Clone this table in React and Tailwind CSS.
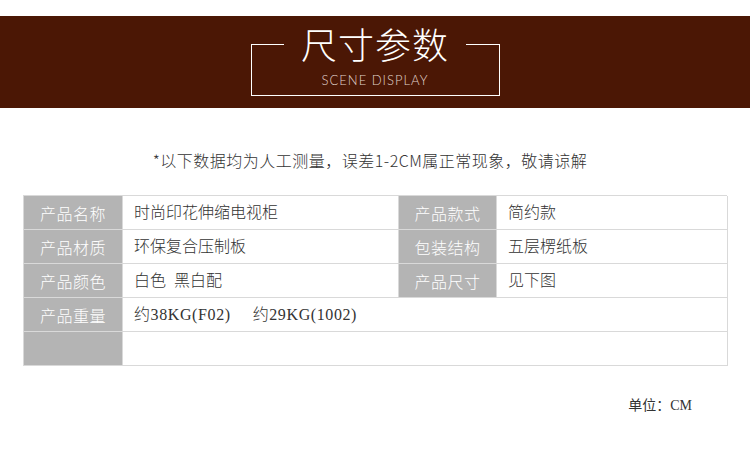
import React from "react";

const cjk = { fontFamily: '"Noto Sans CJK SC", "Noto Sans", sans-serif' };
const serif = { fontFamily: '"Liberation Serif", "Noto Sans CJK SC", serif' };

function Label({ children }) {
  return (
    <div className="h-[34px] bg-[#b4b4b4] border-r border-b border-[#d9d9d9] flex items-center justify-center text-white text-[16px] font-light tracking-[0.5px]" style={cjk}>
      {children}
    </div>
  );
}
function Val({ children, span }) {
  return (
    <div className={`h-[34px] border-r border-b border-[#d9d9d9] flex items-center pl-[11px] text-[#333] text-[16px] font-light ${span ? "col-span-3" : ""}`} style={serif}>
      {children}
    </div>
  );
}

export default function App() {
  return (
    <div className="w-[750px] h-[452px] bg-white overflow-hidden">
      <div className="pt-4">
        <div className="h-[92px] bg-[#4b1705] flex justify-center">
          <div className="relative mt-[28px] w-[249px] h-[52px] border border-white flex justify-center">
            <div className="absolute left-1/2 -translate-x-1/2 -top-[20px] w-[182px] bg-[#4b1705] flex justify-center">
              <span className="text-white text-[36px] leading-none tracking-[1px] font-light" style={cjk}>尺寸参数</span>
            </div>
            <span className="mt-[29px] text-[13px] leading-none text-[#e0d2cb] tracking-[1px] font-light" style={{ fontFamily: 'Lato, "Open Sans", sans-serif' }}>SCENE DISPLAY</span>
          </div>
        </div>
      </div>
      <div className="mt-[44px] text-center text-[16px] leading-none text-[#333] tracking-[0.5px] pr-[10px] font-light" style={cjk}>
        *以下数据均为人工测量，误差1-2CM属正常现象，敬请谅解
      </div>
      <div className="mx-[23px] mt-[27px] grid grid-cols-[99px_276px_98px_231px] border-l border-t border-[#d9d9d9]">
        <Label>产品名称</Label>
        <Val>时尚印花伸缩电视柜</Val>
        <Label>产品款式</Label>
        <Val>简约款</Val>
        <Label>产品材质</Label>
        <Val>环保复合压制板</Val>
        <Label>包装结构</Label>
        <Val>五层楞纸板</Val>
        <Label>产品颜色</Label>
        <Val>白色&nbsp;&nbsp;黑白配</Val>
        <Label>产品尺寸</Label>
        <Val>见下图</Val>
        <Label>产品重量</Label>
        <Val span>
          <span className="tracking-[0.6px]">约38KG(F02)</span>
          <span className="ml-[22px] tracking-[0.6px]">约29KG(1002)</span>
        </Val>
        <Label></Label>
        <Val span></Val>
      </div>
      <div className="mt-[33px] flex justify-end pr-[58px] text-[14px] leading-none text-[#333]" style={serif}>
        单位：CM
      </div>
    </div>
  );
}
